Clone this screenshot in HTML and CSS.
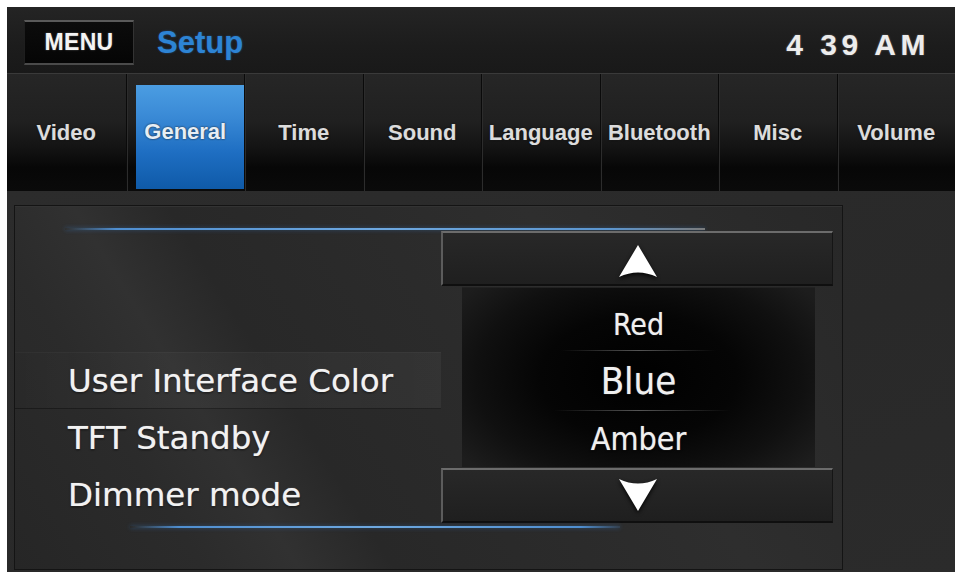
FILE: index.html
```html
<!DOCTYPE html>
<html lang="en">
<head>
<meta charset="utf-8">
<title>Setup</title>
<link rel="stylesheet" href="styles.css">
</head>
<body>
<div class="screen">
  <header class="topbar">
    <div class="menu-btn">MENU</div>
    <div class="title">Setup</div>
    <div class="clock">4 39 AM</div>
  </header>
  <nav class="tabs">
    <div class="tab"><span class="tab-face">Video</span></div>
    <div class="tab active"><span class="tab-face">General</span></div>
    <div class="tab"><span class="tab-face">Time</span></div>
    <div class="tab"><span class="tab-face">Sound</span></div>
    <div class="tab"><span class="tab-face">Language</span></div>
    <div class="tab"><span class="tab-face">Bluetooth</span></div>
    <div class="tab"><span class="tab-face">Misc</span></div>
    <div class="tab"><span class="tab-face">Volume</span></div>
  </nav>
  <main class="content">
    <section class="panel">
      <div class="glow glow-top"></div>
      <div class="panel-body">
        <div class="labels">
          <div class="label-row current">User Interface Color</div>
          <div class="label-row">TFT Standby</div>
          <div class="label-row">Dimmer mode</div>
        </div>
        <div class="picker">
          <div class="step step-up">
            <svg class="arrow" width="40" height="34" viewBox="0 0 40 34"><path d="M20 1 L39 33 Q20 24 1 33 Z" fill="#ffffff"/></svg>
          </div>
          <ul class="options">
            <li class="opt opt-red">Red</li>
            <li class="opt opt-sel">Blue</li>
            <li class="opt opt-amber">Amber</li>
          </ul>
          <div class="step step-down">
            <svg class="arrow" width="40" height="34" viewBox="0 0 40 34"><path d="M1 1 Q20 10 39 1 L20 33 Z" fill="#ffffff"/></svg>
          </div>
        </div>
      </div>
      <div class="glow glow-bottom"></div>
    </section>
  </main>
</div>
</body>
</html>
```
FILE: styles.css
```css
html, body {
  margin: 0;
  padding: 0;
  background: #ffffff;
}
body {
  width: 959px;
  height: 576px;
  overflow: hidden;
  font-family: "Liberation Sans", Arial, sans-serif;
}
.screen {
  margin: 7px 0 0 7px;
  width: 948px;
  height: 565px;
  display: flex;
  flex-direction: column;
  background: #2a2a2a;
}

/* ---------- top bar ---------- */
.topbar {
  height: 67px;
  box-sizing: border-box;
  padding-top: 13px;
  display: flex;
  align-items: flex-start;
  background: linear-gradient(180deg, #242424 0%, #1c1c1c 60%, #191919 100%);
  border-bottom: 1px solid #3a3a3a;
  flex: none;
}
.menu-btn {
  margin-left: 17px;
  width: 110px;
  height: 45px;
  box-sizing: border-box;
  display: flex;
  align-items: center;
  justify-content: center;
  background: linear-gradient(180deg, #0c0c0c, #050505);
  border-top: 2px solid #5a5a5a;
  border-bottom: 2px solid #4a4a4a;
  border-left: 1px solid #1e1e1e;
  border-right: 1px solid #333;
  color: #f4f4f4;
  font-weight: bold;
  font-size: 23px;
  letter-spacing: 0.3px;
  text-shadow: 0 0 2px rgba(255,255,255,0.35);
}
.title {
  margin-left: 23px;
  line-height: 45px;
  font-size: 31px;
  font-weight: bold;
  color: #2d84d4;
  text-shadow: 0 0 2px rgba(40,120,210,0.6);
}
.clock {
  margin-left: auto;
  margin-right: 25px;
  margin-top: 2px;
  line-height: 45px;
  font-size: 30px;
  font-weight: bold;
  letter-spacing: 4.5px;
  color: #ececec;
  text-shadow: 0 0 2px rgba(255,255,255,0.35);
}

/* ---------- tabs ---------- */
.tabs {
  height: 117px;
  flex: none;
  display: grid;
  grid-template-columns: repeat(8, 1fr);
  background: #0b0b0b;
}
.tab {
  display: flex;
  border-left: 1px solid #0a0a0a;
  box-shadow: inset 1px 0 0 #2c2c2c;
  background: linear-gradient(180deg, #262626 0%, #202020 40%, #141414 62%, #070707 80%, #0a0a0a 100%);
}
.tab:first-child {
  border-left: none;
  box-shadow: none;
}
.tab-face {
  flex: 1;
  display: flex;
  align-items: center;
  justify-content: center;
  color: #dcdcdc;
  font-size: 22px;
  font-weight: bold;
  text-shadow: 0 0 2px rgba(0,0,0,0.9), 0 0 1px rgba(255,255,255,0.3);
  white-space: nowrap;
}
.tab.active {
  padding: 11px 0 2px 9px;
}
.tab.active .tab-face {
  padding: 0 9px 10px 0;
  background: linear-gradient(180deg, #4b9de2 0%, #3a8ad6 30%, #1e6ec2 65%, #0f5aa8 100%);
  color: #e6eef6;
}

/* ---------- content ---------- */
.content {
  flex: 1;
  display: flex;
  padding: 14px 112px 2px 7px;
  background: linear-gradient(160deg, #2c2c2c 0%, #292929 60%, #2b2b2b 100%);
}
.panel {
  flex: 1;
  display: flex;
  flex-direction: column;
  border: 1px solid #141414;
  box-shadow: inset 0 1px 0 #333;
  background: linear-gradient(58deg, #262626 0%, #2b2b2b 18%, #313131 27%, #282828 36%, #2b2b2b 55%, #2e2e2e 70%, #282828 100%);
}
.glow {
  height: 2px;
  flex: none;
}
.glow-top {
  margin: 22px 0 0 50px;
  width: 640px;
  background: linear-gradient(90deg, rgba(80,140,210,0) 0%, #4f8ed0 8%, #6ea8e0 50%, #5b95cf 85%, #7b7b7b 100%);
  box-shadow: 0 0 4px rgba(60,130,210,0.45);
}
.glow-bottom {
  margin: 3px 0 0 115px;
  width: 490px;
  background: linear-gradient(90deg, rgba(80,140,210,0) 0%, #4f8ed0 10%, #6ea8e0 50%, #4f8ed0 92%, rgba(80,140,210,0.2) 100%);
  box-shadow: 0 0 4px rgba(60,130,210,0.45);
}
.panel-body {
  margin-top: 1px;
  height: 292px;
  display: flex;
  flex: none;
}
.labels {
  width: 426px;
  display: flex;
  flex-direction: column;
  justify-content: flex-end;
}
.label-row {
  height: 57px;
  box-sizing: border-box;
  padding-left: 53px;
  display: flex;
  align-items: center;
  font-family: "DejaVu Sans", Verdana, sans-serif;
  font-size: 32.5px;
  color: #f2f2f2;
  white-space: nowrap;
  text-shadow: 0 0 1px rgba(255,255,255,0.6), 0 1px 2px rgba(0,0,0,0.8);
}
.label-row.current {
  background: linear-gradient(90deg, rgba(255,255,255,0) 0%, rgba(255,255,255,0.02) 25%, rgba(255,255,255,0.045) 100%);
  border-top: 1px solid rgba(255,255,255,0.03);
  border-bottom: 1px solid rgba(0,0,0,0.35);
}

/* ---------- picker ---------- */
.picker {
  width: 392px;
  display: flex;
  flex-direction: column;
}
.step {
  height: 55px;
  box-sizing: border-box;
  display: flex;
  align-items: center;
  justify-content: center;
  background: linear-gradient(180deg, #282828 0%, #1f1f1f 100%);
  border-top: 2px solid #6c6c6c;
  border-left: 2px solid #5c5c5c;
  border-right: 1px solid #151515;
  border-bottom: 2px solid #0f0f0f;
}
.step-up {
  padding-top: 4px;
}
.step-down {
  padding-bottom: 2px;
}
.arrow {
  display: block;
  filter: drop-shadow(0 2px 2px rgba(0,0,0,0.9));
}
.options {
  list-style: none;
  margin: 1px 18px 1px 21px;
  padding: 0;
  height: 180px;
  display: flex;
  flex-direction: column;
  background: radial-gradient(ellipse 62% 75% at 50% 50%, #000000 0%, #050505 45%, #101010 75%, #1d1d1d 100%);
  box-shadow: inset 0 1px 0 #222;
}
.opt {
  display: flex;
  align-items: center;
  justify-content: center;
  box-sizing: border-box;
  font-family: "DejaVu Sans Condensed", "DejaVu Sans", sans-serif;
  font-stretch: condensed;
  color: #f0f0f0;
  text-shadow: 0 0 1px rgba(255,255,255,0.5), 0 1px 2px rgba(0,0,0,0.9);
  background-repeat: no-repeat;
  background-position: center bottom;
  background-size: 100% 1px;
}
.opt-red {
  height: 64px;
  padding-top: 10px;
  font-size: 30px;
  background-image: linear-gradient(90deg, rgba(110,110,110,0) 28%, rgba(120,120,120,0.7) 50%, rgba(110,110,110,0) 72%);
}
.opt-sel {
  height: 60px;
  font-size: 38px;
  background-image: linear-gradient(90deg, rgba(110,110,110,0) 26%, rgba(120,120,120,0.7) 50%, rgba(110,110,110,0) 76%);
}
.opt-amber {
  height: 56px;
  font-size: 32px;
}
```
